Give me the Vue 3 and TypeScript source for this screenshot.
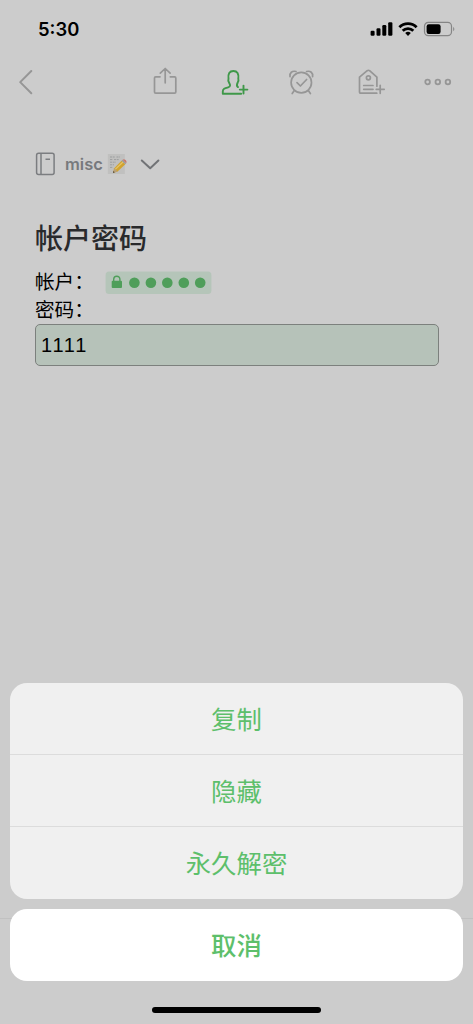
<script setup lang="ts">
interface SheetAction {
  id: string
  label: string
}

const actions: SheetAction[] = [
  { id: 'copy', label: '复制' },
  { id: 'hide', label: '隐藏' },
  { id: 'decrypt', label: '永久解密' },
]
const dotCentres: number[] = [29.4, 45.9, 62.3, 78.8, 95.2]
</script>

<template>
  <main class="screen">
    <header class="status">
      <span class="time">5:30</span>
      <svg class="indicators" width="88" height="20" viewBox="0 0 88 20">
        <g>
          <rect x="0.6" y="11.8" width="4" height="5" rx="1.2" />
          <rect x="6.5" y="9.2" width="4" height="7.6" rx="1.2" />
          <rect x="12.3" y="6" width="4" height="10.8" rx="1.2" />
          <rect x="18.2" y="3.2" width="4.2" height="13.6" rx="1.2" />
        </g>
        <g fill="none" stroke="#000" stroke-width="2.8">
          <path d="M29.4 8.2A12 12 0 0 1 46.6 8.2" />
          <path d="M32.7 11.8A7.5 7.5 0 0 1 43.3 11.8" />
        </g>
        <path d="M35.2 14.1A4.2 4.2 0 0 1 40.8 14.1L38 17Z" />
        <rect x="54.5" y="3.4" width="27" height="13.2" rx="3.8" fill="none" stroke="#858585" stroke-width="1.2" />
        <rect x="56.6" y="5.2" width="14" height="9.8" rx="2.2" />
        <path d="M83.2 7.7Q85.5 10 83.2 12.3Z" fill="#858585" />
      </svg>
    </header>

    <nav class="toolbar">
      <svg class="icon back" viewBox="0 0 30 30"><path d="M15.3 4L4.2 15.1L15.3 26.2" /></svg>
      <svg class="icon" viewBox="0 0 30 30">
        <path d="M10 9.8H5.7Q4.5 9.8 4.5 11V25Q4.5 26.2 5.7 26.2H24.6Q25.8 26.2 25.8 25V11Q25.8 9.8 24.6 9.8H20.3M15.2 15.8V1.9M10.3 6.1L15.2 1.5L20.1 6.1" />
      </svg>
      <svg class="icon active" viewBox="0 0 30 30">
        <path d="M21.2 26.8H2.8V24.4C2.8 21.8 4.5 21.3 8.2 20.3C11.1 19.5 10.1 17.5 9 15.5C8 13.9 8.1 13 8.5 11.8C7.8 6.6 9.5 4 13.4 4C17.3 4 19 6.6 18.3 11.8C18.9 13.5 18.2 14.6 17.7 15.5C16.6 17.7 16.5 19.3 18 20.1M19.8 22.6H27.4M23.5 18.6V26.6" />
      </svg>
      <svg class="icon" viewBox="0 0 30 30">
        <circle cx="15.3" cy="15.6" r="10.2" />
        <path d="M11 15.7L14.4 19L20.6 12.5M8.3 23.6L6.2 26.6M22.3 23.6L24.4 26.6M4 9.7C3.4 5.8 6.2 3.5 10 4.5M26.6 9.7C27.2 5.8 24.4 3.5 20.6 4.5" />
      </svg>
      <svg class="icon" viewBox="0 0 30 30">
        <path d="M19.8 26.2H3.7Q2.5 26.2 2.5 25V10.2L10.2 3.7Q11.4 2.8 12.6 3.7L19.9 10.2V19.2M6.7 18.5H16M6.7 22.3H16M19.2 22.3H27.2M23.2 18.3V26.3" />
        <circle cx="11.4" cy="10.8" r="2" />
      </svg>
      <svg class="icon" viewBox="0 0 30 30">
        <g stroke-width="1.8">
          <circle cx="4.6" cy="15" r="2.3" />
          <circle cx="14.8" cy="15" r="2.3" />
          <circle cx="24.9" cy="15" r="2.3" />
        </g>
      </svg>
    </nav>

    <section class="note">
      <div class="notebook">
        <svg class="book" width="20" height="24" viewBox="0 0 20 24">
          <rect x="1.6" y="1.2" width="17.5" height="21.2" rx="2" />
          <path d="M6 1.2V22.4M10.5 7.3H15" />
        </svg>
        <span class="name">misc</span>
        <svg class="memo" width="20" height="22" viewBox="0 0 20 22">
          <rect x=".8" y="1" width="17" height="20" fill="#c0c0bf" />
          <path
            d="M3 4H8M9.5 4H13M3 6.6H6M7 6.6H12M3 9.2H9M3 11.8H7M3 14.4H6"
            stroke="#999b9c" stroke-width=".9" stroke-dasharray="2 .7"
          />
          <path d="M6 20L7.2 15.2L14.5 7.8L18.3 11.2L10.6 18.4Z" fill="#d1a32f" />
          <path d="M8.2 16.4L16 9" stroke="#e5c568" stroke-width="1.2" />
          <path d="M6 20L7.2 15.2L10.6 18.4Z" fill="#b8a078" />
          <path d="M6 20L6.5 18L7.7 19.3Z" fill="#403b35" />
          <path d="M14.5 7.8L15.6 6.7L19.2 10.2L18.3 11.2Z" fill="#9b9d9c" />
          <path d="M15.6 6.7Q17 5.5 18.6 7Q20.1 8.7 19.2 10.2Z" fill="#c77770" />
        </svg>
        <svg class="chevron" width="20" height="12" viewBox="0 0 20 12"><path d="M1.8 2.5L10.2 10.2L18.4 2.5" /></svg>
      </div>

      <h1 class="title">帐户密码</h1>

      <div class="line">
        <span class="label">帐户：</span>
        <svg class="masked" width="107" height="24" viewBox="0 0 107 24">
          <rect x=".6" y=".4" width="105.8" height="22.6" rx="3.5" fill="#b5c5b9" />
          <path d="M8.7 11V8.3A3.1 3.1 0 0 1 14.9 8.3V11" fill="none" stroke="#4f9e5a" stroke-width="1.4" />
          <rect x="6.7" y="9.7" width="10.3" height="7.4" rx="1" fill="#4f9e5a" />
          <circle v-for="cx in dotCentres" :key="cx" :cx="cx" cy="11.7" r="5.3" fill="#4f9e5a" />
        </svg>
      </div>
      <div class="line"><span class="label">密码：</span></div>
      <div class="secret">1111</div>
    </section>

    <section class="sheet">
      <div class="actions">
        <button v-for="action in actions" :key="action.id" class="action" type="button">{{ action.label }}</button>
      </div>
      <button class="action cancel" type="button">取消</button>
    </section>
    <div class="home"></div>
  </main>
</template>

<style>
body {
  margin: 0;
  background: #ccc;
}
</style>

<style scoped>
.screen {
  box-sizing: border-box;
  display: flex;
  flex-direction: column;
  width: 473px;
  height: 1024px;
  overflow: hidden;
  background: linear-gradient(#c1c1c1, #c1c1c1) 0 918px / 100% 1px no-repeat #ccc;
  font-family: Inter, "Noto Sans CJK SC", sans-serif;
  color: #000;
}
.status {
  display: flex;
  justify-content: space-between;
  align-items: center;
  height: 38px;
  padding: 10px 15px 0 38px;
}
.time {
  font-size: 18.4px;
  font-weight: 600;
  line-height: 38px;
}
.toolbar {
  display: grid;
  grid-template-columns: 134px 70px 66px 71px 66px 30px;
  height: 30px;
  margin: 19px 0 0 16px;
}
.icon {
  width: 30px;
  height: 30px;
  fill: none;
  stroke: #969696;
  stroke-width: 1.7;
  stroke-linecap: round;
  stroke-linejoin: round;
}
.back {
  stroke-width: 2;
}
.active {
  stroke: #3f9849;
  stroke-width: 1.9;
}
.note {
  flex: 1;
  padding: 55px 34.5px 0 35px;
}
.notebook {
  display: flex;
  align-items: center;
  height: 24px;
}
.book,
.chevron {
  fill: none;
  stroke: #7b7d80;
  stroke-width: 1.5;
}
.chevron {
  margin-left: 13px;
  stroke: #717376;
  stroke-width: 2;
  stroke-linecap: round;
  stroke-linejoin: round;
}
.name {
  width: 37px;
  margin: 0 5px 0 10px;
  font-size: 16.5px;
  font-weight: 600;
  line-height: 24px;
  color: #77797c;
}
.memo {
  fill: none;
}
.title {
  margin: 44px 0 10px;
  font-size: 28px;
  font-weight: 500;
  line-height: 38px;
  color: #292a2c;
}
.line {
  display: flex;
  align-items: center;
  height: 28px;
}
.label {
  width: 70px;
  font-size: 19.6px;
  line-height: 28px;
  white-space: nowrap;
}
.masked {
  flex: none;
  margin-top: 1px;
}
.secret {
  box-sizing: border-box;
  height: 42px;
  padding-left: 5px;
  border: 1.5px solid #7c807d;
  border-radius: 5px;
  background: #b6c2b9;
  font-family: "Liberation Sans", "Noto Sans CJK SC", sans-serif;
  font-size: 20px;
  font-kerning: none;
  letter-spacing: 0.3px;
  line-height: 40px;
}
.sheet {
  display: flex;
  flex-direction: column;
  gap: 10px;
  margin: 0 10px;
}
.actions {
  display: flex;
  flex-direction: column;
  overflow: hidden;
  border-radius: 17px;
  background: #f0f0f0;
}
.action {
  box-sizing: border-box;
  height: 72px;
  padding: 0 0 1px;
  border: 0;
  background: transparent;
  font-family: "Noto Sans CJK SC", sans-serif;
  font-size: 25.4px;
  line-height: 69px;
  color: #5dbf6b;
}
.actions .action:not(:last-child) {
  border-bottom: 1px solid #dcdcdc;
}
.actions + .cancel {
  border-radius: 17px;
  background: #fff;
  font-weight: 500;
}
.home {
  width: 169px;
  height: 6px;
  margin: 26px auto 11px;
  border-radius: 3px;
  background: #000;
}
</style>
